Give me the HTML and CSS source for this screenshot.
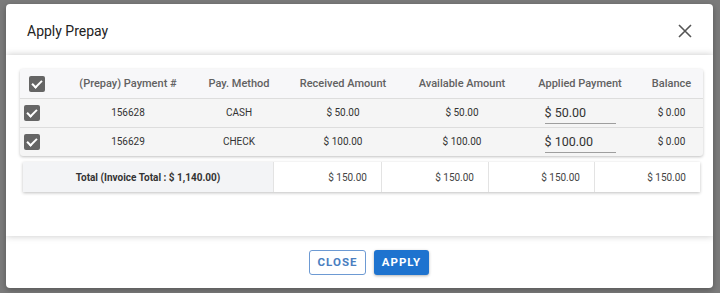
FILE: index.html
```html
<!DOCTYPE html>
<html lang="en">
<head>
    <meta charset="UTF-8">
    <title>Apply Prepay</title>
    <link rel="stylesheet" href="styles.css">
</head>
<body>
    <div class="dialog">
        <div class="dialog-title">
            <h2>Apply Prepay</h2>
            <button class="close-x" aria-label="Close">
                <svg width="14" height="14" viewBox="0 0 14 14"><path d="M1 1 L13 13 M13 1 L1 13" stroke="#555" stroke-width="1.6" fill="none"/></svg>
            </button>
        </div>

        <div class="dialog-body">
            <div class="prepay-table">
                <div class="row head">
                    <div class="cell chk-cell head-chk"><span class="chk"></span></div>
                    <div class="cell">(Prepay) Payment #</div>
                    <div class="cell">Pay. Method</div>
                    <div class="cell">Received Amount</div>
                    <div class="cell">Available Amount</div>
                    <div class="cell">Applied Payment</div>
                    <div class="cell">Balance</div>
                </div>
                <div class="row">
                    <div class="cell chk-cell"><span class="chk"></span></div>
                    <div class="cell">156628</div>
                    <div class="cell">CASH</div>
                    <div class="cell">$ 50.00</div>
                    <div class="cell">$ 50.00</div>
                    <div class="cell"><span class="applied">$ 50.00</span></div>
                    <div class="cell">$ 0.00</div>
                </div>
                <div class="row">
                    <div class="cell chk-cell"><span class="chk"></span></div>
                    <div class="cell">156629</div>
                    <div class="cell">CHECK</div>
                    <div class="cell">$ 100.00</div>
                    <div class="cell">$ 100.00</div>
                    <div class="cell"><span class="applied">$ 100.00</span></div>
                    <div class="cell">$ 0.00</div>
                </div>
            </div>

            <div class="totals">
                <div class="total-label">Total (Invoice Total : $ 1,140.00)</div>
                <div class="total-val">$ 150.00</div>
                <div class="total-val">$ 150.00</div>
                <div class="total-val">$ 150.00</div>
                <div class="total-val">$ 150.00</div>
            </div>
        </div>

        <div class="dialog-actions">
            <button class="btn btn-outline">CLOSE</button>
            <button class="btn btn-primary">APPLY</button>
        </div>
    </div>
</body>
</html>
```

FILE: styles.css
```css
body {
    margin: 0;
    padding: 4px 0 0 6px;
    background-color: #7b7b7b;
    font-family: Roboto, "Liberation Sans", Arial, sans-serif;
    color: #333;
    height: 293px;
    overflow: hidden;
    box-sizing: border-box;
}

.dialog {
    width: 707px;
    height: 284px;
    background: #fff;
    border-radius: 4px;
    overflow: hidden;
    display: flex;
    flex-direction: column;
    box-shadow: 0 2px 6px rgba(0,0,0,0.3);
}

.dialog-title {
    height: 51px;
    display: flex;
    align-items: center;
    justify-content: space-between;
    padding: 0 21px 0 21px;
    box-sizing: border-box;
}
.dialog-title h2 {
    margin: 0;
    font-size: 14px;
    font-weight: 400;
    color: #222;
    position: relative;
    top: 1px;
}
.close-x {
    border: none;
    background: none;
    padding: 0;
    width: 14px;
    height: 14px;
    display: flex;
    position: relative;
    top: 1px;
}

.dialog-body {
    height: 181px;
    background: #fff;
    position: relative;
    z-index: 1;
    box-shadow: 0 0 7px rgba(0,0,0,0.22);
    padding: 14px 10px 0 14px;
    box-sizing: border-box;
}

.prepay-table {
    background: #f5f5f5;
    border-radius: 3px;
    box-shadow: 0 1px 3px rgba(0,0,0,0.25);
}
.row {
    display: grid;
    grid-template-columns: 40px 136px 86px 122px 116px 120px 63px;
    height: 29px;
    border-top: 1px solid #ddd;
    box-sizing: border-box;
}
.row.head {
    border-top: none;
    background: #f7f7f9;
    border-radius: 3px 3px 0 0;
}
.cell {
    display: flex;
    align-items: center;
    justify-content: center;
    font-size: 10px;
    color: #333;
    padding-bottom: 2px;
}
.row.head .cell {
    font-size: 11px;
    font-weight: 500;
    color: #616161;
    padding-bottom: 0;
}
.chk-cell {
    justify-content: flex-start;
    padding-left: 4px;
    padding-bottom: 0;
}
.head-chk {
    padding-left: 9px;
}
.chk {
    width: 16px;
    height: 16px;
    background: #656565;
    border-radius: 2px;
    position: relative;
}
.chk::after {
    content: "";
    position: absolute;
    left: 5px;
    top: 2px;
    width: 4px;
    height: 8px;
    border: solid #fff;
    border-width: 0 2px 2px 0;
    transform: rotate(45deg);
}

.applied {
    width: 71px;
    font-size: 12.5px;
    color: #333;
    border-bottom: 1px solid #9e9e9e;
    padding: 4px 0 3px 0;
    margin-top: 1px;
}

.totals {
    display: grid;
    grid-template-columns: 250px 108px 107px 106px 106px;
    margin: 6px 3px 0 3px;
    height: 30px;
    box-shadow: 0 1px 3px rgba(0,0,0,0.25);
}
.total-label {
    background: #f3f4f6;
    font-size: 10px;
    font-weight: 700;
    color: #333;
    display: flex;
    align-items: center;
    justify-content: center;
}
.total-val {
    background: #fff;
    border-left: 1px solid #e3e3e3;
    font-size: 10px;
    color: #444;
    display: flex;
    align-items: center;
    justify-content: flex-end;
    padding-right: 14px;
}

.dialog-actions {
    flex: 1;
    display: flex;
    justify-content: center;
    align-items: center;
    gap: 8px;
    padding-left: 19px;
}
.btn {
    height: 25px;
    font-family: Roboto, "Liberation Sans", Arial, sans-serif;
    font-size: 11.5px;
    font-weight: 700;
    letter-spacing: 1px;
    border-radius: 3px;
    cursor: pointer;
}
.btn-outline {
    width: 57px;
    background: #fff;
    color: #4a7ebf;
    border: 1px solid #6d9ad3;
}
.btn-primary {
    width: 55px;
    background: #1e73cf;
    color: #fff;
    border: none;
    box-shadow: 0 1px 3px rgba(0,0,0,0.3);
}
```
